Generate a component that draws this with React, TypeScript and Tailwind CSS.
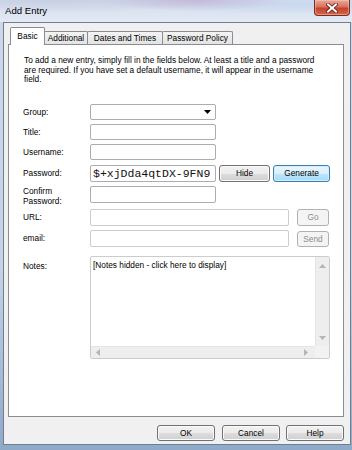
import React from "react";

const F = { fontFamily: '"Liberation Sans", Arial, sans-serif' };

function Btn({ children, className = "", primary = false, disabled = false }: { children: React.ReactNode; className?: string; primary?: boolean; disabled?: boolean }) {
  let cls =
    "flex items-center justify-center rounded-[3px] border text-[8.3px] leading-none shrink-0 ";
  if (primary)
    cls +=
      "border-[#3c7fb1] bg-[linear-gradient(#eaf6fd_0%,#d9f0fc_50%,#bee6fd_51%,#a7d9f5_100%)] shadow-[inset_0_0_0_1px_#d4ecfb] text-black ";
  else if (disabled)
    cls += "border-[#adb2b5] bg-[#f4f4f4] text-[#8b8b8b] ";
  else
    cls +=
      "border-[#707070] bg-[linear-gradient(#f2f2f2_0%,#ebebeb_50%,#dddddd_51%,#cfcfcf_100%)] shadow-[inset_0_0_0_1px_#fbfbfb] text-black ";
  return <div className={cls + className}>{children}</div>;
}

function Input({ className = "", children, light = false }: { className?: string; children?: React.ReactNode; light?: boolean }) {
  return (
    <div
      className={
        "shrink-0 rounded-[2px] border bg-white " +
        (light ? "border-[#c9ccd1] " : "border-[#abadb3] ") +
        className
      }
    >
      {children}
    </div>
  );
}

function Label({ children, className = "" }: { children: React.ReactNode; className?: string }) {
  return <div className={"w-[81px] shrink-0 pl-[14px] text-[8.3px] text-black " + className}>{children}</div>;
}

function Tri({ dir, className = "" }: { dir: "up" | "down" | "left" | "right"; className?: string }) {
  const pts: Record<string, string> = {
    up: "0,4 3.5,0 7,4",
    down: "0,0 3.5,4 7,0",
    left: "4,0 0,3.5 4,7",
    right: "0,0 4,3.5 0,7",
  };
  const vert = dir === "up" || dir === "down";
  return (
    <svg width={vert ? 7 : 4} height={vert ? 4 : 7} viewBox={vert ? "0 0 7 4" : "0 0 4 7"} className={className}>
      <polygon points={pts[dir]} fill="#b4b4b4" />
    </svg>
  );
}

export default function App() {
  return (
    <div
      className="relative w-[352px] h-[450px] overflow-hidden bg-[linear-gradient(180deg,#cdd8ea_0%,#c4d2e6_60%,#8fa9c9_100%)] [font-variant-ligatures:none]"
      style={F}
    >
      {/* Title bar */}
      <div className="relative h-[22px] bg-[radial-gradient(ellipse_at_55%_0%,#c3b9d9_0%,transparent_35%),radial-gradient(ellipse_at_15%_0%,#c7cfe3_0%,transparent_40%),radial-gradient(ellipse_at_85%_20%,#c9d9ee_0%,transparent_40%),linear-gradient(180deg,#d3dcec_0%,#e3eaf4_100%)]">
        <div className="absolute left-[5px] top-[5px] text-[9.6px] leading-[12px] text-black">Add Entry</div>
        <div className="absolute right-[2px] top-0 w-[36px] h-[16px] rounded-b-[4px] border border-t-0 border-[#7b2c22] bg-[linear-gradient(180deg,#e9a99a_0%,#d8735f_45%,#c4432c_55%,#d2664a_100%)] shadow-[inset_0_0_0_1px_rgba(255,200,190,0.5)] flex items-center justify-center">
          <svg width="12" height="10" viewBox="0 0 12 10">
            <path d="M2 1.5 L10 8.5 M10 1.5 L2 8.5" stroke="#5a1a12" strokeWidth="3.6" strokeLinecap="square" />
            <path d="M2 1.5 L10 8.5 M10 1.5 L2 8.5" stroke="#ffffff" strokeWidth="2" strokeLinecap="square" />
          </svg>
        </div>
      </div>

      {/* Client area */}
      <div className="ml-[3px] w-[348px] h-[423px] border border-[#6f7f92] bg-[#f0f0f0] pl-[4px] pr-[6px] pt-[4px]">
        {/* Tabs */}
        <div className="flex items-end h-[17px] pl-[2px]">
          <div className="relative z-10 mb-[-1px] h-[18px] w-[35px] rounded-t-[2px] border border-b-0 border-[#898c95] bg-white flex justify-center pt-[3px] text-[8.3px] leading-[10px] text-black">
            Basic
          </div>
          <div className="ml-[-1px] h-[13px] w-[44px] rounded-t-[2px] border border-b-0 border-[#898c95] bg-[linear-gradient(#f3f3f3,#e3e3e3)] flex justify-center pt-[1px] text-[8.3px] leading-[10px] text-black">
            Additional
          </div>
          <div className="ml-[-1px] h-[13px] w-[76px] rounded-t-[2px] border border-b-0 border-[#898c95] bg-[linear-gradient(#f3f3f3,#e3e3e3)] flex justify-center pt-[1px] text-[8.3px] leading-[10px] text-black">
            Dates and Times
          </div>
          <div className="ml-[-1px] h-[13px] w-[71px] rounded-t-[2px] border border-b-0 border-[#898c95] bg-[linear-gradient(#f3f3f3,#e3e3e3)] flex justify-center pt-[1px] text-[8.3px] leading-[10px] text-black">
            Password Policy
          </div>
        </div>

        {/* Panel */}
        <div className="w-[336px] h-[373px] border border-[#898c95] bg-white flex flex-col">
          <div className="mt-[11px] pl-[15px] h-[29px] text-[8.3px] leading-[9.5px] text-black">
            <div className="whitespace-nowrap">To add a new entry, simply fill in the fields below. At least a title and a password</div>
            <div className="whitespace-nowrap">are required. If you have set a default username, it will appear in the username</div>
            <div className="whitespace-nowrap">field.</div>
          </div>

          {/* Group */}
          <div className="mt-[19px] flex items-center h-[16px]">
            <Label>Group:</Label>
            <Input className="w-[126px] h-[16px] flex items-center justify-end pr-[4px]">
              <svg width="7" height="4" viewBox="0 0 7 4">
                <polygon points="0,0 7,0 3.5,4" fill="#000" />
              </svg>
            </Input>
          </div>

          {/* Title */}
          <div className="mt-[4px] flex items-center h-[16px]">
            <Label>Title:</Label>
            <Input className="w-[126px] h-[16px]" />
          </div>

          {/* Username */}
          <div className="mt-[4px] flex items-center h-[16px]">
            <Label>Username:</Label>
            <Input className="w-[126px] h-[16px]" />
          </div>

          {/* Password */}
          <div className="mt-[5px] flex items-center h-[17px]">
            <Label>Password:</Label>
            <Input className="w-[126px] h-[17px] flex items-center pl-[2px] overflow-hidden">
              <span
                className="text-[11.5px] leading-none text-[#111] whitespace-nowrap"
                style={{ fontFamily: '"Liberation Mono", "Courier New", monospace' }}
              >
                $+xjDda4qtDX-9FN9
              </span>
            </Input>
            <Btn className="ml-[3px] w-[51px] h-[17px]">Hide</Btn>
            <Btn primary className="ml-[3px] w-[57px] h-[17px]">Generate</Btn>
          </div>

          {/* Confirm */}
          <div className="mt-[4px] flex items-start h-[17px]">
            <Label className="leading-[10.5px] mt-[-0.5px]">
              Confirm
              <br />
              Password:
            </Label>
            <Input className="w-[126px] h-[17px]" />
          </div>

          {/* URL */}
          <div className="mt-[6px] flex items-center h-[17px]">
            <Label>URL:</Label>
            <Input light className="w-[199px] h-[17px]" />
            <Btn disabled className="ml-[8px] w-[32px] h-[17px]">Go</Btn>
          </div>

          {/* email */}
          <div className="mt-[4px] flex items-center h-[17px]">
            <Label>email:</Label>
            <Input light className="w-[199px] h-[17px]" />
            <Btn disabled className="ml-[8px] w-[32px] h-[16px] mt-[1px]">Send</Btn>
          </div>

          {/* Notes */}
          <div className="mt-[9px] flex items-start h-[103px]">
            <Label className="pt-[5px] leading-[10px]">Notes:</Label>
            <Input light className="w-[240px] h-[103px] flex flex-col">
              <div className="flex flex-1">
                <div className="flex-1 pl-[2px] pt-[3px] text-[8.3px] leading-[10px] text-black whitespace-nowrap">
                  [Notes hidden - click here to display]
                </div>
                <div className="w-[14px] bg-[#eeeeee] border-l border-[#e4e4e4] flex flex-col items-center justify-between pt-[7px] pb-[6px]">
                  <Tri dir="up" />
                  <Tri dir="down" />
                </div>
              </div>
              <div className="flex h-[12px]">
                <div className="flex-1 bg-[#eeeeee] border-t border-[#e4e4e4] flex items-center justify-between pl-[5px] pr-[7px]">
                  <Tri dir="left" />
                  <Tri dir="right" />
                </div>
                <div className="w-[14px] bg-[#f2f2f2]" />
              </div>
            </Input>
          </div>
        </div>

        {/* Bottom buttons */}
        <div className="mt-[8px] w-[336px] flex justify-end">
          <Btn className="w-[58px] h-[16px]">OK</Btn>
          <Btn className="ml-[7px] w-[58px] h-[16px]">Cancel</Btn>
          <Btn className="ml-[6px] w-[58px] h-[16px]">Help</Btn>
        </div>
      </div>
    </div>
  );
}
